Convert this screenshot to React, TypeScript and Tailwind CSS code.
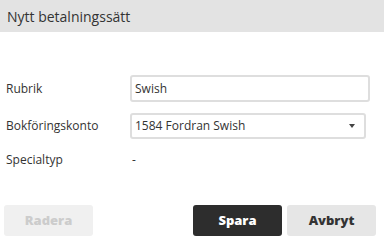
export default function App() {
  return (
    <div className="w-[384px] h-[247px] bg-white font-['Open_Sans',sans-serif] text-[#333]">
      <div className="h-[32px] bg-[#e3e3e3] px-[7px] flex items-center text-[14px] text-[#333]">
        Nytt betalningssätt
      </div>
      <div className="pt-[43px] pl-[6px]">
        <div className="flex items-center h-[27px]">
          <label className="w-[124px] text-[12px]">Rubrik</label>
          <div className="w-[240px] h-[27px] border-2 border-[#dedede] rounded-[3px] flex items-center px-[3px] text-[12px]">
            Swish
          </div>
        </div>
        <div className="flex items-center h-[26px] mt-[11px]">
          <label className="w-[124px] text-[12px]">Bokföringskonto</label>
          <div className="w-[236px] h-[26px] border-2 border-[#dedede] rounded-[3px] flex items-center justify-between pl-[3px] pr-[9px] text-[12px]">
            <span>1584 Fordran Swish</span>
            <span className="w-0 h-0 border-l-[3px] border-r-[3px] border-t-[4px] border-l-transparent border-r-transparent border-t-[#444]" />
          </div>
        </div>
        <div className="flex items-center h-[20px] mt-[11px]">
          <label className="w-[124px] text-[12px]">Specialtyp</label>
          <span className="text-[12px] pl-[2px]">-</span>
        </div>
      </div>
      <div className="flex items-center mt-[35px] pl-[4px] pr-[8px]">
        <button className="w-[89px] h-[31px] rounded-[3px] bg-[#f0f0f0] text-[#cccccc] text-[13px] font-extrabold">
          Radera
        </button>
        <div className="flex-1" />
        <button className="w-[89px] h-[31px] rounded-[3px] bg-[#2d2d2d] text-white text-[13px] font-extrabold">
          Spara
        </button>
        <button className="w-[89px] h-[31px] ml-[5px] rounded-[3px] bg-[#e6e6e6] text-[#333] text-[13px] font-extrabold">
          Avbryt
        </button>
      </div>
    </div>
  );
}
